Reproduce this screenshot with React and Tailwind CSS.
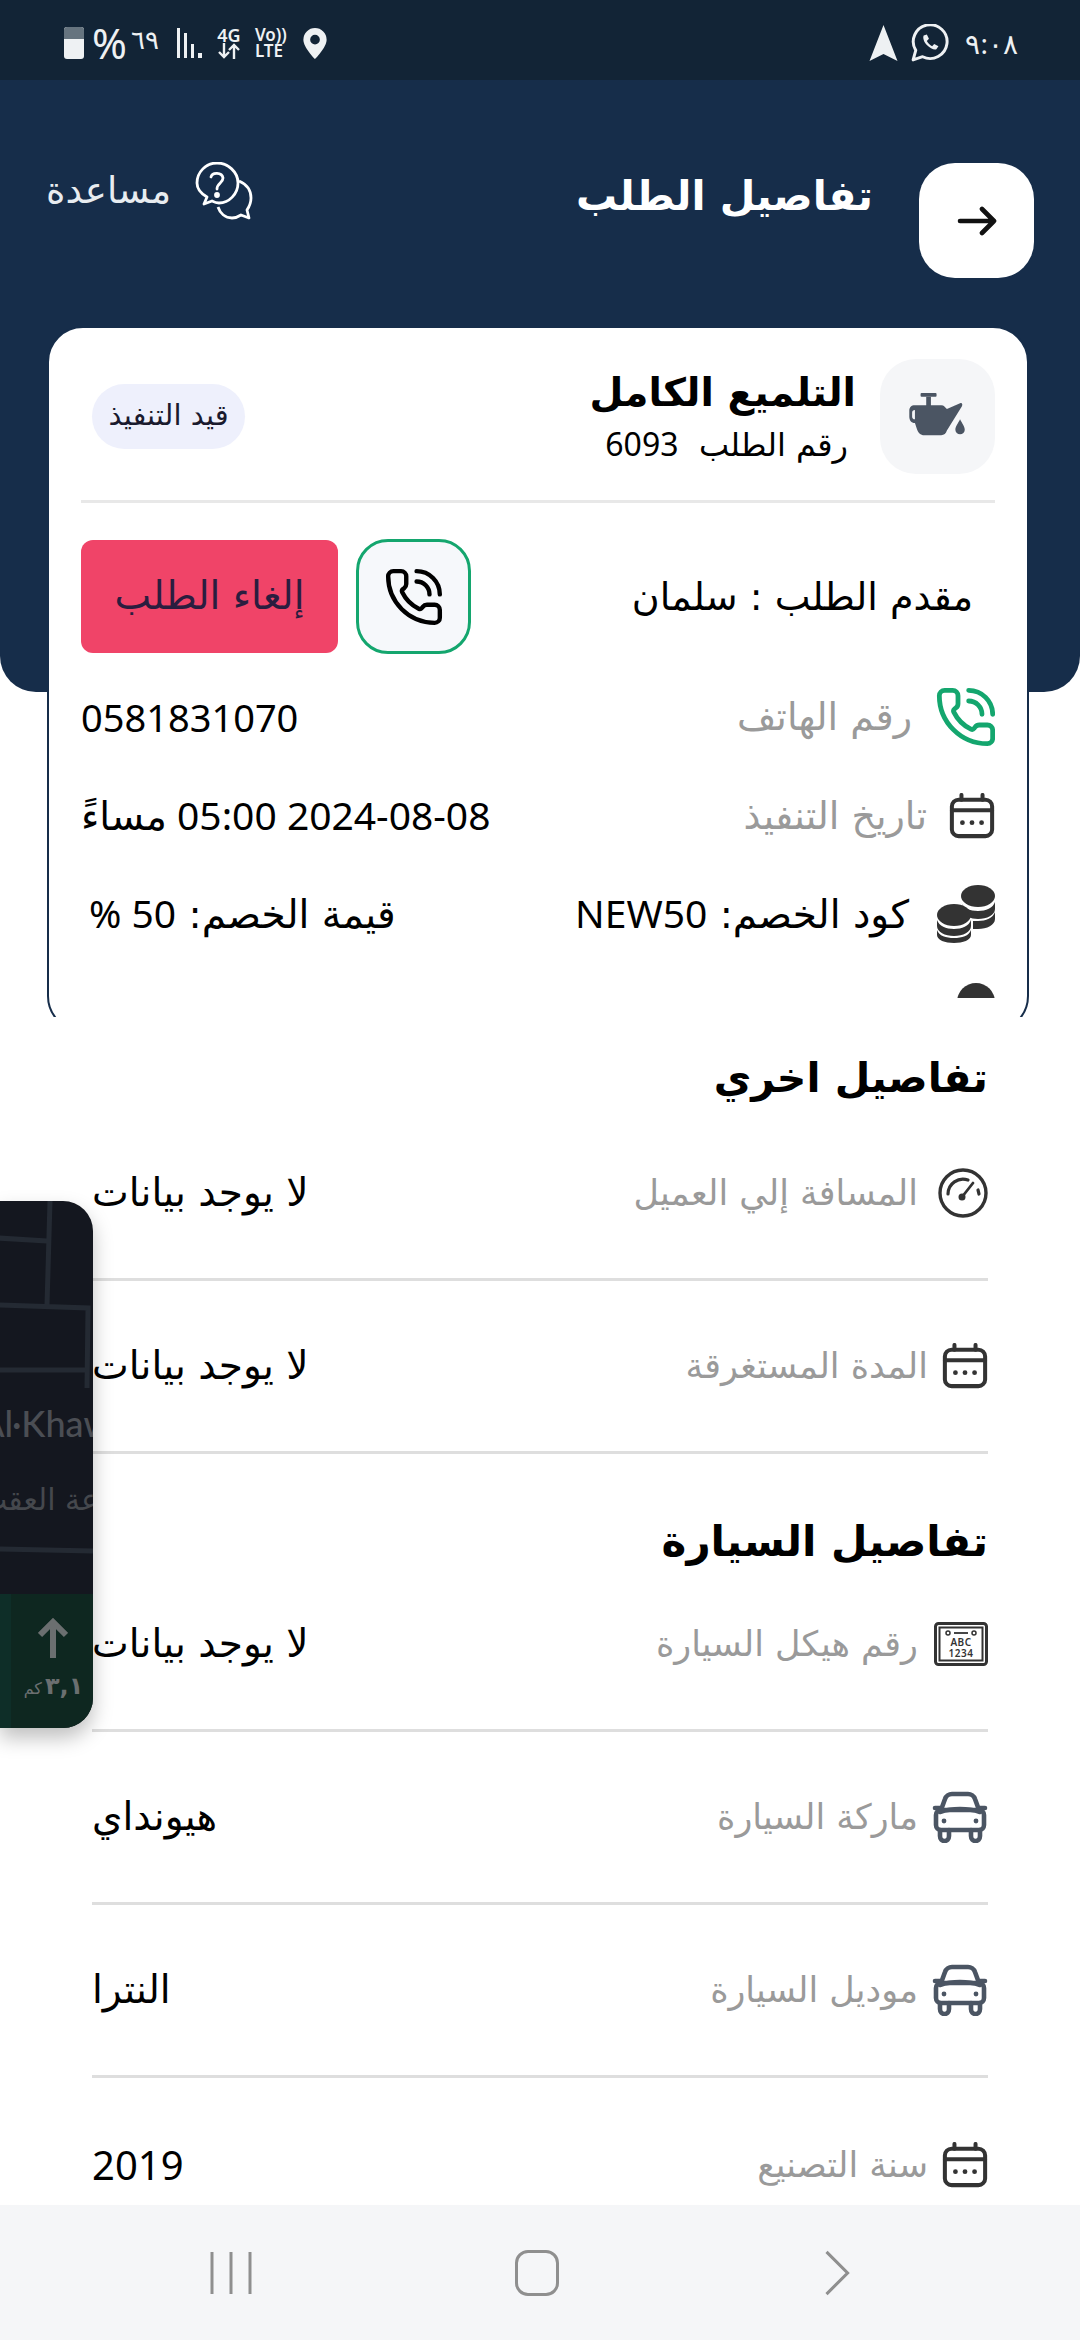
import React from 'react'
import { PhoneCall } from 'lucide-react'

const font = { fontFamily: '"DejaVu Sans", "Noto Sans", sans-serif' }
const num = "font-['Noto_Sans'] font-normal"

function CalendarIcon({ className }) {
  return (
    <svg viewBox="0 0 48 48" className={className} fill="none" stroke="#333" strokeWidth="4.2" strokeLinecap="round">
      <rect x="3" y="7" width="42" height="38" rx="7" />
      <path d="M3 18h42M13 2v5M35 2v5" />
      <circle cx="14" cy="31" r="2.500" fill="#333" stroke="none" />
      <circle cx="24" cy="31" r="2.500" fill="#333" stroke="none" />
      <circle cx="34" cy="31" r="2.500" fill="#333" stroke="none" />
    </svg>
  )
}

function GaugeIcon() {
  return (
    <svg viewBox="0 0 50 50" className="w-[50px] h-[50px] ml-[6px]" fill="none" stroke="#333" strokeWidth="3.4" strokeLinecap="round">
      <circle cx="25" cy="25" r="23" />
      <path d="M10 26a15 15 0 0 1 20-14M40 22l1 4" strokeWidth="3.2" />
      <path d="M24 29l11-14" strokeWidth="2.8" />
      <circle cx="24" cy="29" r="3.500" fill="#333" stroke="none" />
    </svg>
  )
}

function PlateIcon() {
  return (
    <svg viewBox="0 0 54 44" className="w-[54px] h-[44px] ml-[2px]" fill="none" stroke="#333">
      <rect x="1.500" y="1.500" width="51" height="41" rx="3" strokeWidth="3" />
      <rect x="5.500" y="5.500" width="43" height="33" strokeWidth="2" />
      <circle cx="14" cy="11" r="2" strokeWidth="1.500" />
      <circle cx="40" cy="11" r="2" strokeWidth="1.500" />
      <path d="M20 11h14" strokeWidth="1.800" />
      <text x="27" y="24" textAnchor="middle" fontSize="10" fontWeight="600" fill="#333" stroke="none" letterSpacing="0.5" style={{ fontFamily: 'Noto Sans, sans-serif' }}>ABC</text>
      <text x="27" y="35" textAnchor="middle" fontSize="10" fontWeight="600" fill="#333" stroke="none" letterSpacing="0.5" style={{ fontFamily: 'Noto Sans, sans-serif' }}>1234</text>
    </svg>
  )
}

function CarIcon() {
  return (
    <svg viewBox="0 0 56 52" className="w-[56px] h-[52px]" fill="none" stroke="#4b5563" strokeWidth="4.6" strokeLinecap="round" strokeLinejoin="round">
      <path d="M9 19l4-11c1-3 4-5 7-5h16c3 0 6 2 7 5l4 11" />
      <path d="M3 17h5M48 17h5" />
      <rect x="4" y="19" width="48" height="20" rx="5" />
      <path d="M8 21c12-4 28-4 40 0" />
      <path d="M8 39v6c0 3 2 5 4.500 5s4.500-2 4.500-5v-6M39 39v6c0 3 2 5 4.500 5s4.500-2 4.500-5v-6" />
      <circle cx="12" cy="30" r="2.400" fill="#4b5563" stroke="none" />
      <circle cx="44" cy="30" r="2.400" fill="#4b5563" stroke="none" />
    </svg>
  )
}

function CoinsIcon() {
  return (
    <svg viewBox="0 0 58 58" className="w-[58px] h-[58px]" fill="#333">
      <ellipse cx="41" cy="11" rx="17" ry="11" />
      <path d="M24 17c2 6 9 9 17 9s15-3 17-9v7c0 6-8 10-17 10-4 0-7-1-10-2z" />
      <path d="M36 36c2 0 3 0 5 0 8 0 15-3 17-9v7c0 6-8 10-17 10h-5z" />
      <ellipse cx="17" cy="30" rx="17" ry="11" />
      <path d="M0 35c2 6 9 9 17 9s15-3 17-9v6c0 6-8 10-17 10S0 47 0 41z" />
      <path d="M0 45c2 6 9 8 17 8s15-2 17-8v5c0 5-8 8-17 8S0 55 0 50z" />
    </svg>
  )
}

function OilCan() {
  return (
    <svg viewBox="0 0 60 50" className="w-[57px] h-[47px]" fill="#4b5563">
      <rect x="12" y="0" width="17" height="4" rx="1" />
      <rect x="18" y="4" width="5" height="10" />
      <path d="M6 13h28c3 0 4 2 6 4l14-6c2-1 3 1 2 3L40 40c-1 3-3 5-6 5H16c-4 0-7-3-8-7L6 32C2 32 0 29 0 25v-6c0-4 2-6 6-6zm0 5c-2 0-3 1-3 3v4c0 2 1 3 3 3z" />
      <path d="M54 28c2 4 5 8 5 11a5 5 0 0 1-10 0c0-3 3-7 5-11z" />
    </svg>
  )
}

function CardRow({ icon, label, value }) {
  return (
    <div className="flex items-center justify-between">
      <div className="flex items-center gap-[22px]">
        {icon}
        <span className="text-[38px] leading-[50px] text-[#9a9a9a]">{label}</span>
      </div>
      {value}
    </div>
  )
}

function InfoRow({ icon, label, value, numeric, last }) {
  return (
    <div className={'h-[173px] mx-[92px] flex items-center justify-between ' + (last ? '' : 'border-b-[3px] border-[#dedede]')}>
      <div className="flex items-center gap-[14px]">
        <div className="shrink-0 flex">{icon}</div>
        <span className="text-[35px] leading-[48px] text-[#9a9a9a]">{label}</span>
      </div>
      <span className={'leading-[50px] text-black ' + (numeric ? 'text-[40px] ' + num : 'text-[39px]')}>{value}</span>
    </div>
  )
}

function StatusBar() {
  return (
    <div dir="ltr" className="h-[80px] pt-[6px] bg-[#122436] flex items-center justify-between pl-[64px] pr-[62px] text-[#eef1f3] font-['Noto_Sans']">
      <div className="flex items-center gap-[12px]">
        <div className="w-[20px] h-[32px] rounded-[3px] bg-[#eef1f3] relative overflow-hidden">
          <div className="h-[12px] bg-[#66747f]" />
        </div>
        <span className="text-[42px] leading-none -ml-[4px]">%</span>
        <span className="text-[26px] leading-none -ml-[8px] -mt-[8px]">٦٩</span>
        <svg viewBox="0 0 28 30" className="w-[28px] h-[30px] ml-[6px]" fill="#eef1f3">
          <rect x="0" y="0" width="3" height="30" />
          <rect x="7" y="5" width="3" height="25" />
          <rect x="14" y="16" width="3" height="14" />
          <rect x="21" y="25" width="4" height="5" />
        </svg>
        <div className="flex flex-col items-center text-[18px] leading-[16px] font-semibold">
          <span>4G</span>
          <svg viewBox="0 0 24 16" className="w-[24px] h-[16px]" fill="none" stroke="#eef1f3" strokeWidth="2.400">
            <path d="M7 0v14M2 9l5 5 5-5M17 16V2M12 7l5-5 5 5" />
          </svg>
        </div>
        <div className="flex flex-col items-start text-[17px] leading-[16px] font-semibold ml-[2px]">
          <span>Vo))</span>
          <span>LTE</span>
        </div>
        <svg viewBox="0 0 24 32" className="w-[24px] h-[31px] ml-[4px]" fill="#eef1f3">
          <path fillRule="evenodd" d="M12 0a12 12 0 0 1 12 12c0 8-12 20-12 20S0 20 0 12A12 12 0 0 1 12 0zm0 7a5 5 0 1 0 0 10 5 5 0 0 0 0-10z" />
        </svg>
      </div>
      <div className="flex items-center gap-[13px]">
        <svg viewBox="0 0 28 36" className="w-[29px] h-[36px]" fill="#eef1f3"><path d="M14 0l14 36-14-7-14 7z" /></svg>
        <svg viewBox="0 0 36 36" className="w-[38px] h-[38px]" fill="none" stroke="#eef1f3" strokeWidth="2.8">
          <path d="M2 34l2.500-9A16 16 0 1 1 11 31z" strokeLinejoin="round" />
          <path d="M12 11c-1 2 0 6 3 9s7 5 9 4l2-3-4-2-2 2c-2-1-4-3-5-5l2-2-2-4z" fill="#eef1f3" stroke="none" />
        </svg>
        <span className="text-[28px] leading-none ml-[3px]">٩:٠٨</span>
      </div>
    </div>
  )
}

export default function App() {
  return (
    <div dir="rtl" style={font} className="relative w-[1080px] h-[2340px] bg-white overflow-hidden flex flex-col">
      <StatusBar />

      <div className="h-[612px] -mb-[366px] bg-[#162d4a] rounded-b-[36px] flex items-start justify-between pt-[83px] pr-[46px] pl-[46px] shrink-0">
        <div className="flex items-center gap-[46px]">
          <div className="w-[115px] h-[115px] bg-white rounded-[36px] flex items-center justify-center">
            <svg viewBox="0 0 40 32" className="w-[40px] h-[32px]" fill="none" stroke="#111" strokeWidth="4.6" strokeLinecap="round" strokeLinejoin="round">
              <path d="M3 16h34M25 4l12 12-12 12" />
            </svg>
          </div>
          <h1 className="text-[41px] leading-[60px] font-semibold text-white -mt-[50px]">تفاصيل الطلب</h1>
        </div>
        <div className="flex items-center gap-[24px] -mt-[1px]">
          <svg viewBox="0 0 58 58" className="w-[58px] h-[58px]" fill="none" stroke="#fff" strokeWidth="2.8" strokeLinejoin="round">
            <path d="M22 1c11 0 21 9 21 20s-9 20-19 20c-3 0-5-1-7-2l-8 3 3-7C5 31 2 26 2 21 2 10 11 1 22 1z" />
            <path d="M44 19c7 3 12 9 12 17 0 5-2 9-4 12l2 8-8-3c-3 2-6 3-9 3-7 0-12-5-14-11" />
            <path d="M16 15c1-5 11-5 12 1 0 5-6 5-6 11" strokeLinecap="round" />
            <circle cx="22" cy="33" r="1.500" fill="#fff" />
          </svg>
          <span className="text-[37px] leading-[48px] text-[#e8ecf0]">مساعدة</span>
        </div>
      </div>

      <div className="relative ml-[47px] mr-[51px] h-[691px] overflow-hidden shrink-0">
        <div className="h-[706px] bg-white border-[2px] border-[#162d4a] rounded-[36px] px-[32px] pt-[30px]">
          <div className="h-[640px] overflow-hidden">
            <div className="flex items-center justify-between h-[116px]">
              <div className="flex items-center gap-[24px]">
                <div className="w-[115px] h-[115px] rounded-[36px] bg-[#f5f6f8] flex items-center justify-center">
                  <OilCan />
                </div>
                <div>
                  <div className="text-[39px] leading-[56px] font-semibold text-black">التلميع الكامل</div>
                  <div className="text-[32px] leading-[46px] text-black pr-[8px]">رقم الطلب&nbsp; <span className={num}>6093</span></div>
                </div>
              </div>
              <div className="w-[153px] h-[65px] rounded-full bg-[#eef0fc] flex items-center justify-center ml-[11px] text-[29px] text-[#1a1a2e]">قيد التنفيذ</div>
            </div>
            <div className="h-[3px] bg-[#e8e8e8] mt-[26px]" />
            <div className="flex items-center justify-between mt-[36px]">
              <span className="text-[38px] leading-[50px] text-black pr-[22px]">مقدم الطلب : سلمان</span>
              <div className="flex items-center gap-[18px]">
                <div className="w-[115px] h-[115px] rounded-[32px] bg-[#f6f8fb] border-[3px] border-[#14a66e] flex items-center justify-center">
                  <PhoneCall className="w-[62px] h-[62px] text-black" strokeWidth={1.7} />
                </div>
                <div className="w-[257px] h-[113px] rounded-[12px] bg-[#f04468] flex items-center justify-center text-[39px] text-[#2b1d3f]">إلغاء الطلب</div>
              </div>
            </div>
            <div className="flex flex-col gap-[43px] mt-[33px]">
              <CardRow
                icon={<PhoneCall className="w-[64px] h-[64px] text-[#14a66e] shrink-0 -mr-[3px] -my-[2px]" strokeWidth={1.8} />}
                label="رقم الهاتف"
                value={<span className={'text-[38px] leading-[50px] text-black ' + num}>0581831070</span>}
              />
              <CardRow
                icon={<CalendarIcon className="w-[46px] h-[46px] shrink-0" />}
                label="تاريخ التنفيذ"
                value={<span className={'text-[39px] leading-[50px] text-black ' + num}>2024-08-08 05:00 <span className="font-['DejaVu_Sans']">مساءً</span></span>}
              />
              <div className="flex items-center justify-between pl-[8px]">
                <div className="flex items-center gap-[28px]">
                  <CoinsIcon />
                  <span className="text-[39px] leading-[50px] text-black">كود الخصم: <span className={num}>NEW50</span></span>
                </div>
                <span className="text-[39px] leading-[50px] text-black">قيمة الخصم: <span className={num}>50 %</span></span>
              </div>
              <div className="flex -mt-[3px]">
                <div className="w-[38px] h-[38px] rounded-full bg-[#333]" />
              </div>
            </div>
          </div>
        </div>
      </div>

      <div className="shrink-0">
        <h2 className="mx-[92px] mt-[29px] text-[41px] leading-[64px] font-semibold text-black">تفاصيل اخري</h2>
        <div className="-mt-[2px]">
          <InfoRow icon={<GaugeIcon />} label="المسافة إلي العميل" value="لا يوجد بيانات" />
          <InfoRow icon={<CalendarIcon className="w-[46px] h-[46px]" />} label="المدة المستغرقة" value="لا يوجد بيانات" />
        </div>
        <h2 className="mx-[92px] mt-[56px] text-[42px] leading-[64px] font-semibold text-black">تفاصيل السيارة</h2>
        <div className="-mt-[15px]">
          <InfoRow icon={<PlateIcon />} label="رقم هيكل السيارة" value="لا يوجد بيانات" />
          <InfoRow icon={<CarIcon />} label="ماركة السيارة" value="هيونداي" />
          <InfoRow icon={<CarIcon />} label="موديل السيارة" value="النترا" />
          <InfoRow icon={<CalendarIcon className="w-[46px] h-[46px]" />} label="سنة التصنيع" value="2019" numeric last />
        </div>
      </div>

      {/* floating map bubble from another app */}
      <div className="absolute left-0 top-[1201px] w-[93px] h-[527px] rounded-r-[30px] overflow-hidden bg-[#14171f] shadow-[0_10px_20px_rgba(0,0,0,0.25)]">
        <svg viewBox="0 0 93 393" className="w-[93px] h-[393px]" fill="none" stroke="#242a33" strokeWidth="5">
          <path d="M50 0l-3 104M-2 37l49 3M-2 104l90 3 -1 80M-2 169h90M-2 348l95 2" />
        </svg>
        <div dir="ltr" className="absolute left-[-20px] top-[204px] text-[36px] leading-none font-medium text-[#4b4e54] whitespace-nowrap font-['Lato']">Al·Khaw</div>
        <div className="absolute right-[-6px] top-[284px] text-[30px] leading-none text-[#45484d] whitespace-nowrap">عة العقب</div>
        <div className="absolute left-0 right-0 bottom-0 h-[134px] bg-[#0e2720] flex flex-col items-center pt-[24px]">
          <div className="absolute left-0 top-0 bottom-0 w-[11px] bg-[#0e2e28]" />
          <svg viewBox="0 0 30 40" className="w-[30px] h-[40px] ml-[12px]" fill="none" stroke="#6b6f70" strokeWidth="6">
            <path d="M15 40V4M2 17L15 4l13 13" />
          </svg>
          <div className="mt-[10px] ml-[14px] flex items-baseline gap-[3px] text-[#6b6f70]">
            <span className="text-[24px] font-bold">٣,١</span>
            <span className="text-[16px]">كم</span>
          </div>
        </div>
      </div>

      {/* android nav bar */}
      <div dir="ltr" className="absolute left-0 right-0 bottom-0 h-[135px] bg-[#f5f6f8] flex items-center">
        <div className="w-[462px] flex justify-center">
          <svg viewBox="0 0 44 44" className="w-[44px] h-[44px]" stroke="#8f8f8f" strokeWidth="3"><path d="M3 1v42M22 1v42M41 1v42" /></svg>
        </div>
        <div className="w-[150px] flex justify-center">
          <div className="w-[44px] h-[46px] rounded-[13px] border-[3px] border-[#8f8f8f]" />
        </div>
        <div className="flex-1 flex justify-center pr-[16px]">
          <svg viewBox="0 0 28 48" className="w-[28px] h-[46px]" fill="none" stroke="#8f8f8f" strokeWidth="3.2"><path d="M2 2l22 22L2 46" /></svg>
        </div>
      </div>
    </div>
  )
}
